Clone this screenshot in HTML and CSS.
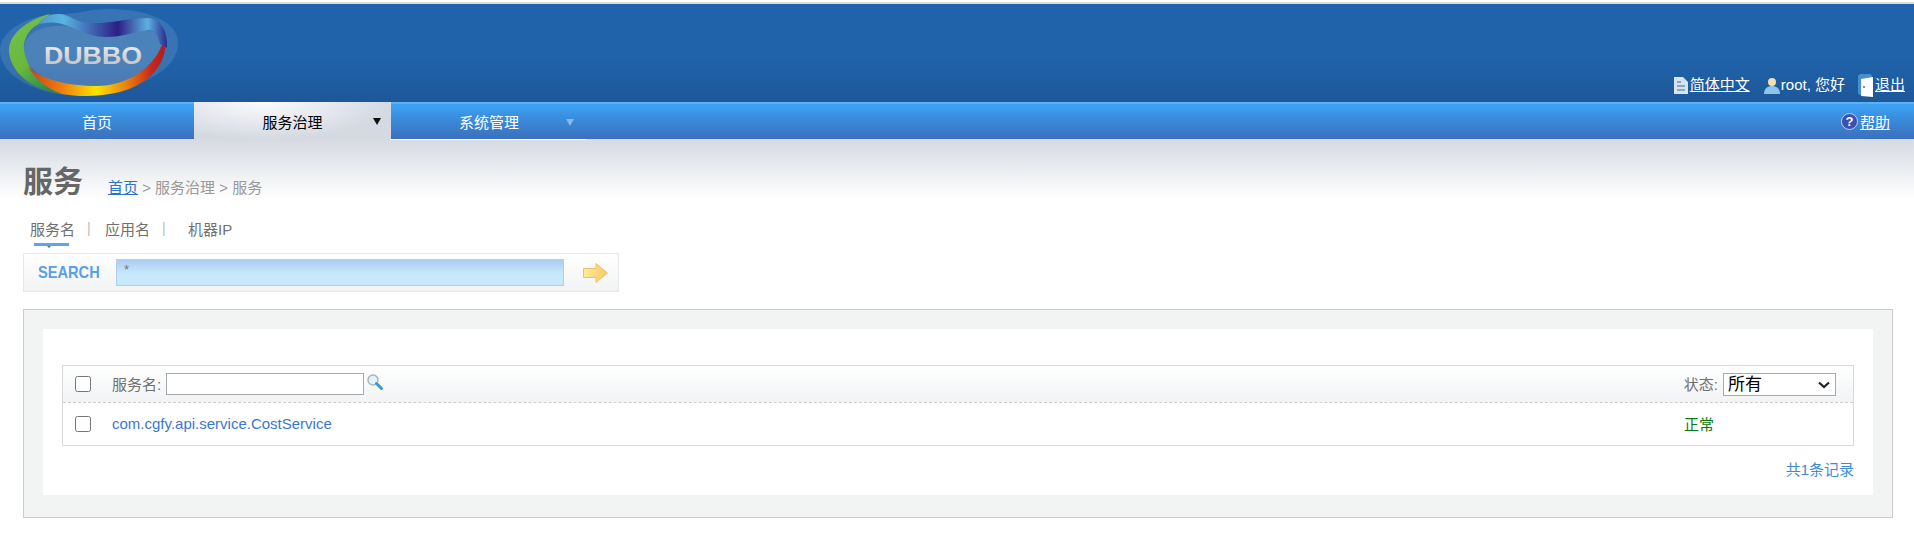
FILE: index.html
```html
<!DOCTYPE html>
<html>
<head>
    <title>dubbo-admin</title>
    <meta charset="utf-8">
    <link rel="stylesheet" href="styles.css">
</head>
<body>
    <div class="header">
        <svg class="logo" width="182" height="98" viewBox="0 4 182 98">
            <defs>
                <linearGradient id="lgGreen" x1="0" y1="0" x2="0.6" y2="1">
                    <stop offset="0" stop-color="#72c050"/>
                    <stop offset="0.6" stop-color="#6cb83c"/>
                    <stop offset="1" stop-color="#2c8c4c"/>
                </linearGradient>
                <linearGradient id="lgBottom" x1="0" y1="0" x2="1" y2="0">
                    <stop offset="0" stop-color="#c8401c"/>
                    <stop offset="0.25" stop-color="#ec8010"/>
                    <stop offset="0.5" stop-color="#fce400"/>
                    <stop offset="0.72" stop-color="#e88010"/>
                    <stop offset="0.9" stop-color="#c82818"/>
                    <stop offset="1" stop-color="#b01c20"/>
                </linearGradient>
                <linearGradient id="lgTop" x1="0" y1="0" x2="1" y2="0">
                    <stop offset="0" stop-color="#4f93c9"/>
                    <stop offset="0.2" stop-color="#5cb4e2"/>
                    <stop offset="0.45" stop-color="#3b5cab"/>
                    <stop offset="0.62" stop-color="#2b1f86"/>
                    <stop offset="0.85" stop-color="#5cb0e0"/>
                    <stop offset="1" stop-color="#2a2a8a"/>
                </linearGradient>
                <linearGradient id="lgWord" x1="0" y1="0" x2="0" y2="1">
                    <stop offset="0" stop-color="#f2f2f2"/>
                    <stop offset="1" stop-color="#bcbcbc"/>
                </linearGradient>
            </defs>
            <path d="M0 50 C0 30 30 14 60 14 C78 14 90 9 108 9 C140 9 178 18 178 43 C178 66 150 84 110 92 C60 104 0 84 0 50Z" fill="#fff" fill-opacity="0.11"/>
            <path d="M24 50 C24 28 55 20 90 30 C120 36 160 18 162 46 C162 70 120 88 85 88 C55 86 24 72 24 50Z" fill="#fff" fill-opacity="0.1"/>
            <path d="M50 14 C32 18 9 32 9 50 C9 70 30 90 62 94 C45 84 27 72 24 50 C23 40 28 30 37 25Z" fill="url(#lgGreen)"/>
            <path d="M28 66 C36 76 60 86 97 86 C125 86 152 70 162 45 L165 43 C167 62 150 84 120 92 C100 97 78 97 62 94 C45 88 34 78 28 66Z" fill="url(#lgBottom)"/>
            <path d="M37 25 C42 18 48 14 58 14 C70 14 74 22 90 23 C110 24 130 18 147 18 C160 18 168 30 167 48 L160 44 C158 36 155 30 148 30 C135 32 122 37 106 37 C85 37 70 24 57 23 C50 22 42 23 37 25Z" fill="url(#lgTop)"/>
            <text class="logo-word" x="44" y="64" textLength="98" lengthAdjust="spacingAndGlyphs" fill="url(#lgWord)">DUBBO</text>
        </svg>
        <div class="user-links">
            <svg class="icon-doc" width="14" height="17" viewBox="0 0 14 17">
                <path d="M0 0H9L14 5V17H0Z" fill="#d6e4f2"/>
                <path d="M3 5H7M3 9H11M3 13H11" stroke="#7390b0" stroke-width="1.5" fill="none"/>
            </svg>
            <a href="#" class="link-lang">简体中文</a>
            <svg class="icon-user" width="16" height="17" viewBox="0 0 16 17">
                <circle cx="8" cy="5" r="4" fill="#f0e2a8"/>
                <path d="M0 17C0 11 4 9 8 9C12 9 16 11 16 17Z" fill="#8cc4ea"/>
            </svg>
            <span class="user-name">root, 您好</span>
            <svg class="icon-door" width="15" height="23" viewBox="0 0 15 23">
                <rect x="0" y="0" width="14" height="21" rx="3" fill="#4a8ed2"/>
                <path d="M3 5L15 3V23L3 22Z" fill="#fff"/>
                <circle cx="6" cy="13" r="1" fill="#3a70a8"/>
            </svg>
            <a href="#">退出</a>
        </div>
    </div>

    <div class="nav">
        <a href="#" class="nav-item">首页</a>
        <a href="#" class="nav-item active">服务治理<span class="nav-arrow"></span></a>
        <a href="#" class="nav-item sys">系统管理<span class="nav-arrow"></span></a>
        <div class="nav-help">
            <svg width="17" height="17" viewBox="0 0 17 17">
                <circle cx="8.5" cy="8.5" r="8" fill="#3c50b4" stroke="#c4d0ea"/>
                <text class="help-mark" x="8.5" y="13" text-anchor="middle">?</text>
            </svg>
            <a href="#">帮助</a>
        </div>
    </div>

    <div class="page-head">
        <h1>服务</h1>
        <div class="crumbs"><a href="#">首页</a> &gt; 服务治理 &gt; 服务</div>
    </div>

    <div class="tabs">
        <span class="tab current">服务名</span>
        <span class="tab-sep">|</span>
        <span class="tab">应用名</span>
        <span class="tab-sep">|</span>
        <span class="tab tab-ip">机器IP</span>
    </div>

    <div class="search-bar">
        <span class="search-label"><span class="search-word">SEARCH</span></span>
        <div class="search-input">*</div>
        <svg class="search-go" width="25" height="20" viewBox="0 0 25 20">
            <defs>
                <linearGradient id="goFill" x1="0" y1="0" x2="1" y2="0">
                    <stop offset="0" stop-color="#fdeb9c"/>
                    <stop offset="1" stop-color="#fbc860"/>
                </linearGradient>
            </defs>
            <path d="M0.5 5.5H13V0.5L24.5 10L13 19.5V14.5H0.5Z" fill="url(#goFill)" stroke="#f0c070"/>
        </svg>
    </div>

    <div class="panel">
        <div class="panel-inner">
            <div class="list">
                <div class="list-head">
                    <input type="checkbox" class="check">
                    <span class="col-label">服务名:</span>
                    <input type="text" class="filter-input">
                    <svg class="icon-find" width="16" height="16" viewBox="0 0 16 16">
                        <circle cx="6" cy="6" r="5" fill="#e8f2f6" stroke="#9fb8c0" stroke-width="1.5"/>
                        <path d="M9.5 9.5L14.5 14.5" stroke="#3a9ad8" stroke-width="3" stroke-linecap="round"/>
                    </svg>
                    <span class="status-col">
                        <span class="col-label">状态:</span>
                        <span class="select-wrap">
                            <select class="status-select"><option>所有</option></select>
                            <svg class="select-arrow" width="12" height="8" viewBox="0 0 12 8">
                                <path d="M1 1.5L6 6L11 1.5" fill="none" stroke="#222" stroke-width="2.2"/>
                            </svg>
                        </span>
                    </span>
                </div>
                <div class="list-row">
                    <input type="checkbox" class="check">
                    <a href="#" class="service-link">com.cgfy.api.service.CostService</a>
                    <span class="status-ok">正常</span>
                </div>
            </div>
            <div class="total">共1条记录</div>
        </div>
    </div>
</body>
</html>
```
FILE: styles.css
```css
* {
    box-sizing: border-box;
}

body {
    margin: 0;
    padding-top: 2px;
    background-color: #fff;
    font-family: "Liberation Sans", "Noto Sans CJK SC", sans-serif;
    font-size: 15px;
    color: #666;
    overflow: hidden;
}

a {
    color: #fff;
}

.header {
    position: relative;
    height: 100px;
    border-top: 2px solid #d8dbe0;
    background: linear-gradient(#2063aa 55%, #1d5798);
    display: flex;
    justify-content: flex-end;
    align-items: flex-end;
}

.logo {
    position: absolute;
    left: 0;
    top: 0;
}

.logo-word {
    font-family: "Liberation Sans", sans-serif;
    font-size: 24px;
    font-weight: bold;
}

.user-links {
    display: flex;
    align-items: center;
    height: 26px;
    margin-bottom: 4px;
    padding-right: 9px;
    color: #fff;
    line-height: 20px;
}

.link-lang {
    margin-left: 2px;
}

.icon-user {
    margin-left: 14px;
}

.user-name {
    margin-left: 1px;
}

.icon-door {
    margin-left: 13px;
    margin-right: 2px;
}

.nav {
    display: flex;
    height: 37px;
    background: linear-gradient(#3da0f2 8%, #3a8fe0 35%, #3a70bc);
    border-top: 2px solid #59b0f6;
}

.nav-item {
    position: relative;
    width: 194px;
    line-height: 38px;
    text-align: center;
    color: #fff;
    text-decoration: none;
}

.nav-item.active {
    width: 197px;
    height: 38px;
    margin-top: -2px;
    line-height: 41px;
    color: #000;
    background: radial-gradient(ellipse at 35% 0, #fbfbfc, #d4d9e2 70%);
}

.nav-item.sys {
    width: 196px;
    height: 36px;
    line-height: 38px;
    border-bottom: 1px solid #fff;
}

.nav-arrow {
    position: absolute;
    right: 10px;
    top: 16px;
    border-left: 4px solid transparent;
    border-right: 4px solid transparent;
    border-top: 7px solid #111;
}

.nav-item.sys .nav-arrow {
    right: 13px;
    top: 15px;
    border-top-color: #8ab8e8;
}

.nav-help {
    display: flex;
    align-items: center;
    gap: 2px;
    height: 34px;
    margin-left: auto;
    padding-right: 24px;
}

.help-mark {
    font-family: "Liberation Sans", sans-serif;
    font-size: 13px;
    font-weight: bold;
    fill: #fff;
}

.page-head {
    display: flex;
    align-items: flex-start;
    height: 70px;
    padding: 23px 0 0 23px;
    background: linear-gradient(#d6dae1, #e6e9ed 35%, #fff 85%);
}

h1 {
    margin: 0 25px 0 0;
    font-size: 30px;
    line-height: 40px;
    color: #666;
}

.crumbs {
    margin-top: 16px;
    line-height: 20px;
    color: #999;
}

.crumbs a {
    color: #2a72c5;
}

.tabs {
    display: flex;
    align-items: center;
    height: 30px;
    margin-top: 4px;
    padding-left: 30px;
}

.tab {
    position: relative;
    color: #707070;
}

.tab.current::before {
    content: "";
    position: absolute;
    left: 4px;
    right: 6px;
    bottom: -7px;
    height: 3px;
    background-color: #5aa6e6;
}

.tab.current::after {
    content: "";
    position: absolute;
    left: 17px;
    bottom: -9px;
    border-left: 2px solid transparent;
    border-right: 2px solid transparent;
    border-top: 2px solid #3a6ea8;
}

.tab-sep {
    width: 30px;
    padding-left: 12px;
    color: #bbb;
    font-size: 14px;
}

.tab-ip {
    margin-left: 8px;
}

.search-bar {
    display: flex;
    align-items: center;
    width: 596px;
    height: 39px;
    margin: 10px 0 0 23px;
    padding-left: 14px;
    border: 1px solid #e6e8ea;
    background: linear-gradient(#fff, #f2f3f4);
}

.search-label {
    width: 78px;
    font-size: 17px;
    font-weight: bold;
    color: #5aa0e6;
}

.search-word {
    display: inline-block;
    transform: scaleX(0.86);
    transform-origin: left center;
}

.search-input {
    width: 448px;
    height: 27px;
    padding: 2px 7px;
    font-size: 13px;
    color: #777;
    border: 1px solid #b4d0e8;
    background: linear-gradient(#a8cdf2, #c8e8fb 55%);
}

.search-go {
    margin-left: 19px;
}

.panel {
    height: 209px;
    margin: 17px 21px 0 23px;
    padding: 19px;
    border: 1px solid #ccc;
    background-color: #f2f4f4;
}

.panel-inner {
    height: 166px;
    padding: 36px 19px 0;
    background-color: #fff;
}

.list {
    border: 1px solid #d9d9d9;
}

.list-head {
    display: flex;
    align-items: center;
    height: 37px;
    padding-left: 12px;
    border-bottom: 1px dashed #ccc;
    background: linear-gradient(#fff, #f1f3f5);
}

.list-row {
    display: flex;
    align-items: center;
    height: 42px;
    padding-left: 12px;
}

.check {
    width: 16px;
    height: 16px;
    margin: 0 21px 0 0;
}

.col-label {
    margin-top: -2px;
    color: #707070;
}

.filter-input {
    width: 198px;
    height: 22px;
    margin-left: 5px;
    border: 1px solid #aaa;
    background-color: #fff;
}

.icon-find {
    margin: -4px 0 0 3px;
}

.status-col {
    display: flex;
    align-items: center;
    margin-left: auto;
    padding-right: 17px;
}

.select-wrap {
    position: relative;
    display: flex;
    margin-left: 5px;
}

.status-select {
    width: 113px;
    height: 23px;
    padding: 1px 0 0 4px;
    appearance: none;
    font-family: "Liberation Sans", "Noto Sans CJK SC", sans-serif;
    font-size: 17px;
    line-height: 20px;
    color: #000;
    background-color: #fff;
    border: 1px solid #aaa;
    border-radius: 0;
}

.select-arrow {
    position: absolute;
    right: 6px;
    top: 8px;
}

.service-link {
    margin-top: -2px;
    color: #3a78d0;
    text-decoration: none;
}

.status-ok {
    width: 169px;
    margin-top: -2px;
    margin-left: auto;
    color: #0a7a0a;
}

.total {
    margin-top: 12px;
    text-align: right;
    color: #3d8bd4;
}
```
